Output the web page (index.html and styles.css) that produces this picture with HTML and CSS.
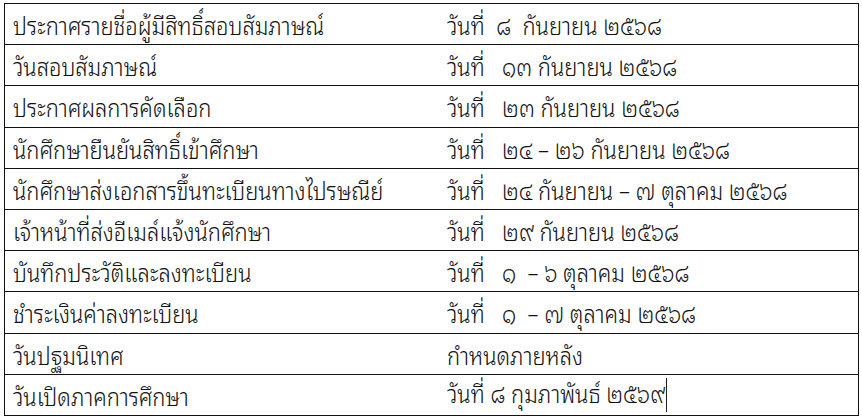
FILE: index.html
```html
<!DOCTYPE html>
<html lang="th">
<head>
<meta charset="utf-8">
<link rel="stylesheet" href="styles.css">
</head>
<body>
<table class="schedule">
  <tr><td class="event"><span class="txt">ประกาศรายชื่อผู้มีสิทธิ์สอบสัมภาษณ์</span></td><td class="date"><span class="txt">วันที่  ๘  กันยายน ๒๕๖๘</span></td></tr>
  <tr><td class="event"><span class="txt">วันสอบสัมภาษณ์</span></td><td class="date"><span class="txt">วันที่   ๑๓ กันยายน ๒๕๖๘</span></td></tr>
  <tr><td class="event"><span class="txt">ประกาศผลการคัดเลือก</span></td><td class="date"><span class="txt">วันที่   ๒๓ กันยายน ๒๕๖๘</span></td></tr>
  <tr><td class="event"><span class="txt">นักศึกษายืนยันสิทธิ์เข้าศึกษา</span></td><td class="date"><span class="txt">วันที่   ๒๔ – ๒๖ กันยายน ๒๕๖๘</span></td></tr>
  <tr><td class="event"><span class="txt">นักศึกษาส่งเอกสารขึ้นทะเบียนทางไปรษณีย์</span></td><td class="date"><span class="txt">วันที่   ๒๔ กันยายน – ๗ ตุลาคม ๒๕๖๘</span></td></tr>
  <tr><td class="event"><span class="txt">เจ้าหน้าที่ส่งอีเมล์แจ้งนักศึกษา</span></td><td class="date"><span class="txt">วันที่   ๒๙ กันยายน ๒๕๖๘</span></td></tr>
  <tr><td class="event"><span class="txt">บันทึกประวัติและลงทะเบียน</span></td><td class="date"><span class="txt">วันที่   ๑  – ๖ ตุลาคม ๒๕๖๘</span></td></tr>
  <tr><td class="event"><span class="txt">ชำระเงินค่าลงทะเบียน</span></td><td class="date"><span class="txt">วันที่   ๑  – ๗ ตุลาคม ๒๕๖๘</span></td></tr>
  <tr><td class="event"><span class="txt">วันปฐมนิเทศ</span></td><td class="date"><span class="txt">กำหนดภายหลัง</span></td></tr>
  <tr><td class="event"><span class="txt">วันเปิดภาคการศึกษา</span></td><td class="date"><span class="txt">วันที่ ๘ กุมภาพันธ์ ๒๕๖๙<span class="caret"></span></span></td></tr>
</table>
</body>
</html>
```

FILE: styles.css
```css
html, body {
  margin: 0;
  padding: 0;
  background: #ffffff;
}
body {
  padding: 3px 0 0 4px;
  font-family: "Noto Sans Thai Looped", "Loma", sans-serif;
  color: #111111;
}
.schedule {
  border-collapse: collapse;
  width: 855px;
  table-layout: fixed;
}
.schedule td {
  height: 40.2px;
  padding: 0 8px;
  border-top: 1.5px solid #111;
  border-bottom: 1.5px solid #111;
  font-size: 25px;
  font-weight: 300;
  line-height: 28px;
  white-space: pre;
  vertical-align: middle;
}
.schedule td.event {
  width: 418px;
  border-left: 1.5px solid #111;
}
.schedule td.date {
  border-right: 1.5px solid #111;
}
.txt {
  display: inline-block;
  padding-top: 0;
  transform: scaleX(0.88);
  transform-origin: left center;
}
.caret {
  display: inline-block;
  width: 0;
  height: 34px;
  border-left: 1.3px solid #000;
  vertical-align: -9px;
  margin-left: 1px;
}
```
